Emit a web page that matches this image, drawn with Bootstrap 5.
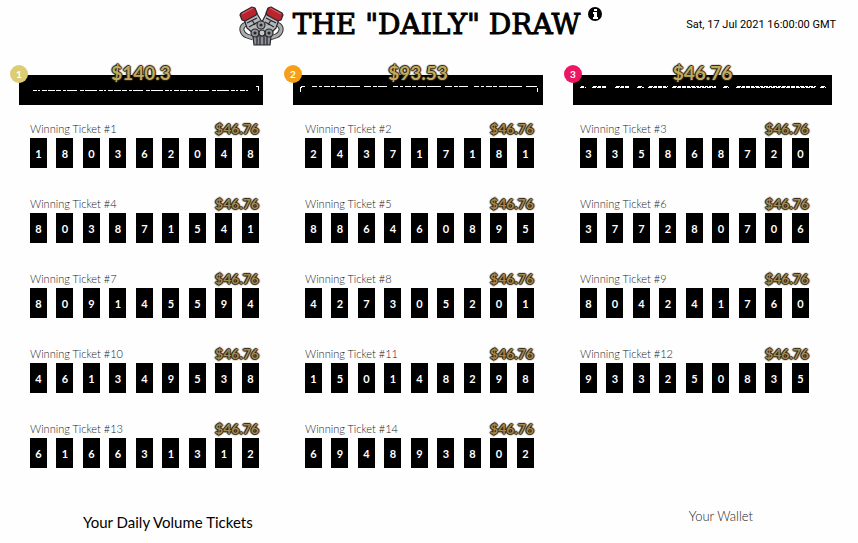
<!DOCTYPE html>
<html lang="en">
<head>
<meta charset="utf-8">
<meta name="viewport" content="width=device-width, initial-scale=1">
<title>The "Daily" Draw</title>
<link href="https://cdn.jsdelivr.net/npm/bootstrap@5.3.0/dist/css/bootstrap.min.css" rel="stylesheet">
<style>
body { font-family: Lato, "Open Sans", sans-serif; color: #000; background: #fefefe; }
.top-bar { display: grid; grid-template-columns: 1fr auto 1fr; padding: 5px 22px 0 4px; height: 48px; }
.draw-title { font-family: "DejaVu Serif", serif; font-size: 28px; line-height: 40px; font-weight: 400; -webkit-text-stroke: 1px #000; }
.info-btn { line-height: 0; margin-top: 2px; }
.draw-time { font-family: Roboto, sans-serif; font-size: 11px; line-height: 16px; margin-top: 12px; }
.prizes { display: grid; grid-template-columns: 244fr 250fr 259fr; gap: 30px; padding: 27px 26px 0 19px; }
.prize-box { position: relative; background: #000; height: 30px; }
.rank { position: absolute; left: -9px; top: -10px; width: 18px; height: 18px; border-radius: 50%; color: #fff; font-size: 10px; line-height: 18px; font-weight: 700; text-align: center; }
.rank-1 { background: #dccd75; }
.rank-2 { background: #f6a01a; }
.rank-3 { background: #ec1763; }
.gold { color: #c2a960; font-weight: 700; text-shadow: 1px 0 1px #2b210c, -1px 0 1px #2b210c, 0 1px 1px #2b210c, 0 -1px 1px #2b210c, 0 0 2px #2b210c; }
.prize-sum { position: absolute; left: 0; right: 0; top: -14px; text-align: center; font-size: 19px; line-height: 24px; }
.scramble { position: absolute; left: 0; top: 10px; width: 100%; height: 10px; }
.scramble path { fill: none; stroke: #fff; shape-rendering: crispEdges; }
.tickets { padding: 14px 17px 0 16px; }
.ticket { padding: 0 32px 26px 14px; }
.ticket-head { height: 19px; }
.ticket-name { font-size: 11px; line-height: 20px; font-weight: 300; color: #222; }
.ticket-sum { font-size: 14px; line-height: 20px; color: #a58750; }
.digit { background: #000; color: #fff; width: 17px; height: 30px; font-size: 11px; line-height: 31px; font-weight: 700; text-align: center; }
.volume-title { font-size: 15px; line-height: 20px; font-weight: 400; margin-top: 18px; }
.wallet-title { font-size: 13px; line-height: 20px; font-weight: 300; margin-top: 12px; color: #222; }
.foot { padding: 0 105px 0 83px; }
</style>
<script src="https://cdn.jsdelivr.net/npm/bootstrap@5.3.0/dist/js/bootstrap.bundle.min.js"></script>
</head>
<body>
<header class="top-bar">
  <div></div>
  <div class="d-flex">
    <svg class="me-2" width="47" height="42" viewBox="0 0 47 42" aria-hidden="true">
      <g stroke="#26272a" stroke-width="1.2" stroke-linejoin="round">
        <path d="M8 19C1 22 4 29 9 31l6 2M39 19c7 3 4 10-1 12l-6 2" fill="none" stroke="#333" stroke-width="5"/>
        <path d="M8 19C1 22 4 29 9 31l6 2M39 19c7 3 4 10-1 12l-6 2" fill="none" stroke="#aaacb0" stroke-width="3"/>
        <path d="M6 14 18 7l6 10 5-10 12 7-3 9-6 6-8 5-8-5-7-6z" fill="#b5b7bb"/>
        <path d="M3 8 14 2l3 1 2 5-1 2-11 6-3-1-2-5z" fill="#b9242f"/>
        <path d="M44 8 33 2l-3 1-2 5 1 2 11 6 3-1 2-5z" fill="#b9242f"/>
        <path d="M4 9l11-6M43 9 32 3" stroke="#e05660" fill="none"/>
        <path d="M9 18l10-5M11 22l9-5M38 18l-10-5M36 22l-9-5M14 15l3 5M33 15l-3 5" fill="none"/>
        <path d="M15 31h18l-1 9H16z" fill="#8d9096"/>
        <path d="M19 32v8M22 32v8M26 32v8M29 32v8" fill="none"/>
        <circle cx="23" cy="20" r="4" fill="#9b9da2"/><circle cx="17" cy="28" r="4" fill="#8f9297"/><circle cx="31" cy="28" r="4" fill="#8f9297"/><circle cx="24" cy="28" r="3" fill="#c6c7ca"/>
        <circle cx="17" cy="28" r="1"/><circle cx="31" cy="28" r="1"/><circle cx="23" cy="20" r="1"/>
      </g>
    </svg>
    <h1 class="draw-title m-0 text-nowrap">THE "DAILY" DRAW</h1>
    <button type="button" class="info-btn btn p-0 border-0 ms-2 align-self-start" aria-label="About the draw">
      <svg width="14" height="14" viewBox="0 0 14 14"><circle cx="7" cy="7" r="7" fill="#000"/><path d="M6 2h3v2H6zM5 5h4v5h1v2H5v-2h1V7H5z" fill="#fff"/></svg>
    </button>
  </div>
  <time class="draw-time text-end text-nowrap" datetime="2021-07-17T16:00:00Z">Sat, 17 Jul 2021 16:00:00 GMT</time>
</header>
<main>
  <section class="prizes" aria-label="Prizes">
    <div class="prize-box">
      <span class="rank rank-1">1</span><span class="prize-sum gold">$140.3</span>
      <svg class="scramble" viewBox="0 0 244 10" preserveAspectRatio="none" aria-hidden="true"><path d="M14 5.5H229" stroke-dasharray="4 1 2 2 5 1 7 1 5 2 3 1 10 3 4 1 12 2"/><path d="M237 1.5h2v4"/></svg>
    </div>
    <div class="prize-box">
      <span class="rank rank-2">2</span><span class="prize-sum gold">$93.53</span>
      <svg class="scramble" viewBox="0 0 250 10" preserveAspectRatio="none" aria-hidden="true"><path d="M19 1.5H240" stroke-dasharray="5 2 3 2 6 1 4 2 8 1 14 4 7 2 4 1 9 6"/><path d="M12 1.5H9L7.5 3v4M240 1.5h4M244.5 3v4"/></svg>
    </div>
    <div class="prize-box">
      <span class="rank rank-3">3</span><span class="prize-sum gold">$46.76</span>
      <svg class="scramble" viewBox="0 0 259 10" preserveAspectRatio="none" aria-hidden="true">
        <path d="M8 1.5h3M20 1.5h13M43 1.5h14M65 1.5h5M76 1.5h19M100 1.5h43M151 1.5h5M164 1.5h79M248 1.5h4" stroke-dasharray="4 1 3 1"/>
        <path d="M7 2.5h6M19 2.5h14M42 2.5h15M64 2.5h7M75 2.5h20M99 2.5h45M150 2.5h6M163 2.5h80M247 2.5h6" stroke-dasharray="4 1"/>
      </svg>
    </div>
  </section>
  <section class="tickets" aria-label="Winning tickets">
    <div class="row g-0" id="ticketList"></div>
  </section>
  <div class="foot d-flex justify-content-between">
    <h2 class="volume-title mb-0">Your Daily Volume Tickets</h2>
    <h2 class="wallet-title mb-0">Your Wallet</h2>
  </div>
</main>
<script>
const numbers = ["180362048", "243717181", "335868720", "803871541", "886460895", "377280706", "809145594", "427305201", "804241760", "461349538", "150148298", "933250835", "616631312", "694893802"];
document.getElementById("ticketList").innerHTML = numbers.map((number, i) => `
  <article class="col-4 ticket">
    <div class="ticket-head d-flex justify-content-between">
      <span class="ticket-name">Winning Ticket #${i + 1}</span><span class="ticket-sum gold">$46.76</span>
    </div>
    <div class="d-flex justify-content-between">${[...number].map(d => `<span class="digit">${d}</span>`).join("")}</div>
  </article>`).join("");
</script>
</body>
</html>
